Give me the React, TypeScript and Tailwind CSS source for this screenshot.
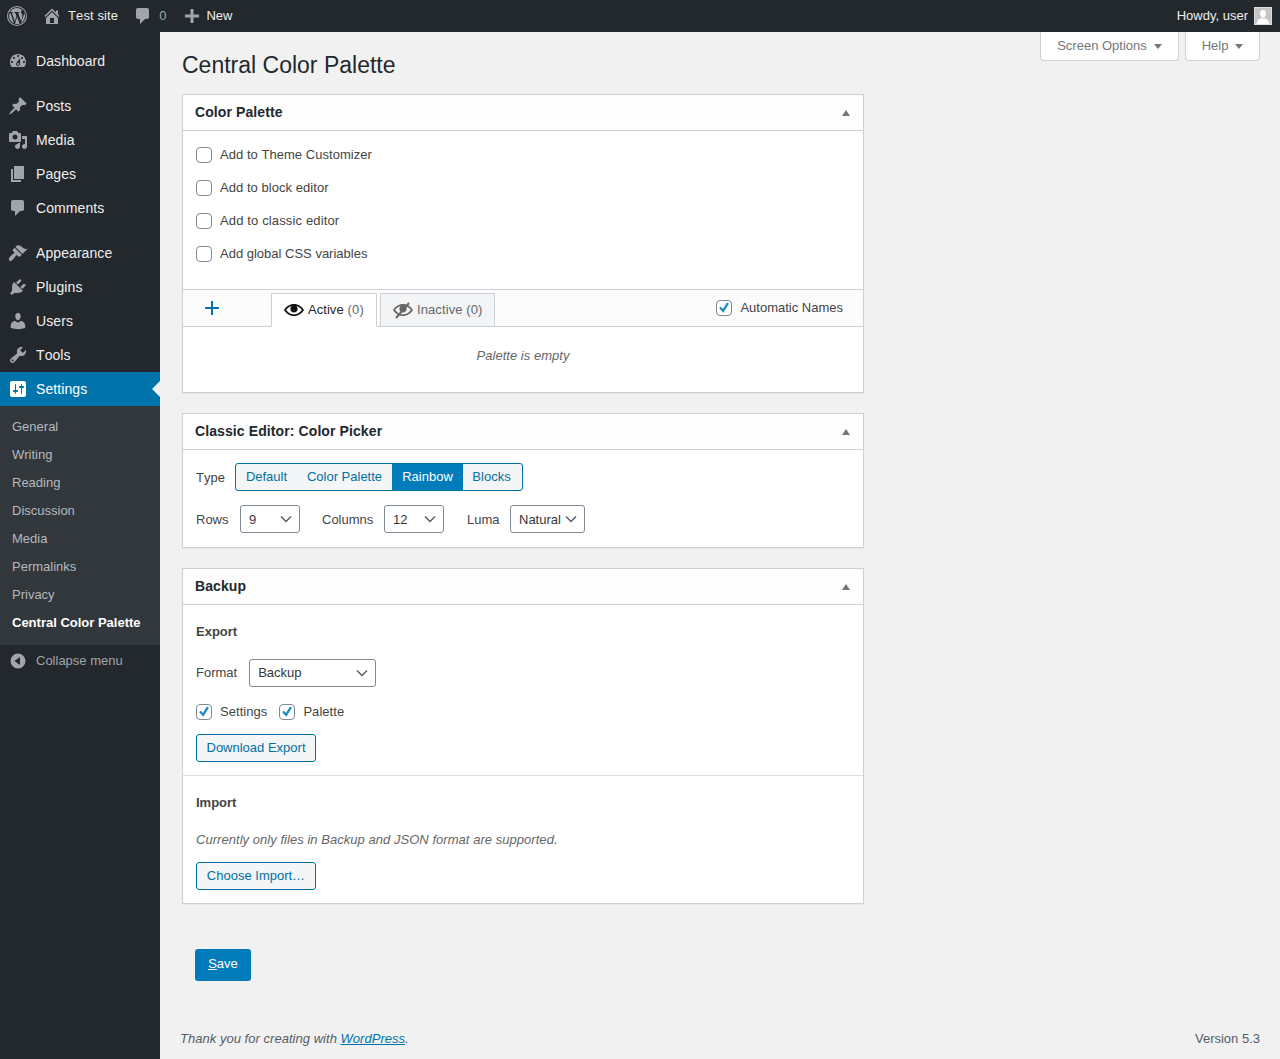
import type { ReactNode } from "react"

const icons: Record<string, string> = {
	dashboard: "M3.76 16h12.48c1.1-1.37 1.76-3.11 1.76-5 0-4.42-3.58-8-8-8s-8 3.58-8 8c0 1.89.66 3.63 1.76 5zM10 4c.55 0 1 .45 1 1s-.45 1-1 1-1-.45-1-1 .45-1 1-1zM6 6c.55 0 1 .45 1 1s-.45 1-1 1-1-.45-1-1 .45-1 1-1zm8 0c.55 0 1 .45 1 1s-.45 1-1 1-1-.45-1-1 .45-1 1-1zm-5.37 5.55L12 7v6c0 1.1-.9 2-2 2s-2-.9-2-2c0-.57.24-1.08.63-1.45zM4 10c.55 0 1 .45 1 1s-.45 1-1 1-1-.45-1-1 .45-1 1-1zm12 0c.55 0 1 .45 1 1s-.45 1-1 1-1-.45-1-1 .45-1 1-1zm-5 3c0-.55-.45-1-1-1s-1 .45-1 1 .45 1 1 1 1-.45 1-1z",
	post: "M10.44 3.02l1.82-1.82 6.36 6.35-1.83 1.82c-1.05-.68-2.48-.57-3.41.36l-.75.75c-.92.93-1.04 2.35-.35 3.41l-1.83 1.82-2.41-2.41-2.8 2.79c-.42.42-3.38 2.71-3.8 2.29s1.86-3.39 2.28-3.81l2.79-2.79L4.1 9.36l1.83-1.82c1.05.69 2.48.57 3.4-.36l.75-.75c.93-.92 1.05-2.35.36-3.41z",
	media: "M13 11V4c0-.55-.45-1-1-1h-1.67L9 1H5L3.67 3H2c-.55 0-1 .45-1 1v7c0 .55.45 1 1 1h10c.55 0 1-.45 1-1zM7 4.5c1.38 0 2.5 1.12 2.5 2.5S8.38 9.5 7 9.5 4.5 8.38 4.5 7 5.62 4.5 7 4.5zM14 6h5v10.5c0 1.38-1.12 2.5-2.5 2.5S14 17.88 14 16.5s1.12-2.5 2.5-2.5c.17 0 .34.02.5.05V9h-3V6zm-4 8.05V13h2v3.5c0 1.38-1.12 2.5-2.5 2.5S7 17.88 7 16.5 8.12 14 9.5 14c.17 0 .34.02.5.05z",
	page: "M6 15V2h10v13H6zm-1 1h8v2H3V5h2v11z",
	comment: "M5 2h9c1.1 0 2 .9 2 2v7c0 1.1-.9 2-2 2h-2l-5 5v-5H5c-1.1 0-2-.9-2-2V4c0-1.1.9-2 2-2z",
	appearance: "M14.48 11.06L7.41 3.99l1.5-1.5c.5-.56 2.3-.47 3.51.32 1.21.8 1.43 1.28 2.91 2.1 1.18.64 2.45 1.26 4.45.85zm-.71.71L6.7 4.7 4.93 6.47c-.39.39-.39 1.02 0 1.41l1.06 1.06c.39.39.39 1.03 0 1.42-.6.6-1.43 1.11-2.21 1.69-.35.26-.7.53-1.01.84C1.43 14.23 0 16.06 1.39 17.45c1.39 1.39 3.22-.41 4.19-1.75.31-.31.58-.66.84-1.01.58-.78 1.09-1.61 1.69-2.21.39-.39 1.03-.39 1.42 0l1.06 1.06c.39.39 1.02.39 1.41 0z",
	plugin: "M13.11 4.36L9.87 7.6 8 5.73l3.24-3.24c.35-.34 1.05-.2 1.56.32.52.51.66 1.21.31 1.55zm-8 1.77l.91-1.12 9.01 9.01-1.19.84c-.71.71-2.63 1.16-3.82 1.16H6.14L4.9 17.26c-.59.59-1.54.59-2.12 0-.59-.58-.59-1.53 0-2.12l1.24-1.24v-3.88c0-1.13.4-3.19 1.09-3.89zm7.26 3.97l3.24-3.24c.34-.35 1.04-.21 1.55.31.52.51.66 1.21.31 1.55l-3.24 3.25z",
	users: "M10 9.25c-2.27 0-2.73-3.44-2.73-3.44C7 4.02 7.82 2 9.97 2c2.16 0 2.98 2.02 2.71 3.81 0 0-.41 3.44-2.68 3.44zm0 2.57L12.72 10c2.39 0 4.52 2.33 4.52 4.53v2.49s-3.65 1.13-7.24 1.13c-3.65 0-7.24-1.13-7.24-1.13v-2.49c0-2.25 1.94-4.48 4.47-4.48z",
	tools: "M16.68 9.77c-1.34 1.34-3.3 1.67-4.95.99l-5.41 6.52c-.99.99-2.59.99-3.58 0s-.99-2.59 0-3.57l6.52-5.42c-.68-1.65-.35-3.61.99-4.95 1.28-1.28 3.12-1.62 4.72-1.06l-2.89 2.89 2.82 2.82 2.86-2.87c.53 1.58.18 3.39-1.08 4.65zM3.81 16.21c.4.39 1.04.39 1.43 0 .4-.4.4-1.04 0-1.43-.39-.4-1.03-.4-1.43 0-.39.39-.39 1.03 0 1.43z",
	settings: "M18 16V4c0-1.1-.9-2-2-2H4c-1.1 0-2 .9-2 2v12c0 1.1.9 2 2 2h12c1.1 0 2-.9 2-2zM8 11h1c.55 0 1 .45 1 1s-.45 1-1 1H8v1.5c0 .28-.22.5-.5.5s-.5-.22-.5-.5V13H6c-.55 0-1-.45-1-1s.45-1 1-1h1V5.5c0-.28.22-.5.5-.5s.5.22.5.5V11zm5-2h-1c-.55 0-1-.45-1-1s.45-1 1-1h1V5.5c0-.28.22-.5.5-.5s.5.22.5.5V7h1c.55 0 1 .45 1 1s-.45 1-1 1h-1v5.5c0 .28-.22.5-.5.5s-.5-.22-.5-.5V9z",
	home: "M16 8.5l1.530 1.530-1.060 1.060L10 4.620l-6.470 6.470-1.060-1.060L10 2.500l4 4v-2h2v4zm-6-2.460l6 5.990V18H4v-5.970zM12 17v-5H8v5h4z",
	plus: "M17 8.500v3h-5.500V17h-3v-5.500H3v-3h5.500V3h3v5.500z",
	collapse: "M10 2.500a7.500 7.500 0 1 0 0 15 7.500 7.500 0 0 0 0-15zM12 6v8L6.500 10z",
	eye: "M10 4C5.800 4 2.100 6.400 0 10c2.100 3.600 5.800 6 10 6s7.900-2.400 10-6c-2.100-3.600-5.800-6-10-6zm0 10.400c-3.100 0-6-1.600-7.900-4.400C3.500 8 5.500 6.700 7.800 6.100 6.900 6.800 6.400 7.800 6.400 9c0 2 1.600 3.600 3.600 3.600s3.600-1.600 3.600-3.600c0-1.200-.5-2.200-1.400-2.900 2.300.6 4.300 1.900 5.700 3.900-1.900 2.800-4.800 4.400-7.900 4.400z",
}

function Icon({ name, className }: { name: string; className: string }) {
	return (
		<svg viewBox="0 0 20 20" className={className} fill="currentColor" fillRule="evenodd">
			<path d={icons[name]} />
		</svg>
	)
}

function WpLogo() {
	return (
		<svg viewBox="0 0 20 20" className="w-5 h-5 text-[#a0a5aa]" fill="currentColor">
			<path fillRule="evenodd" d="M10 0a10 10 0 1 0 0 20 10 10 0 0 0 0-20zm0 1A9 9 0 1 1 10 19 9 9 0 0 1 10 1z" />
			<path d="M3.300 6.700 7 17.200C4.100 15.900 2 13.100 2 10c0-1.200.4-2.300 1.300-3.300zM10.100 10.900l2.500 6.800c-.8.300-1.700.4-2.600.4-.7 0-1.400-.1-2-.3zM16.900 6.100c.7 1.200 1.100 2.500 1.100 3.900 0 3-1.600 5.500-4 6.900l2.500-7c.4-1.100.6-2 .6-2.700 0-.4-.1-.8-.2-1.100z" />
			<path d="M15.500 4.600c-.8-.1-1.500.5-1.500 1.400 0 .7.400 1.300.8 2 .3.500.6 1.200.6 2.100 0 .7-.3 1.500-.6 2.600l-.8 2.600-2.800-8.400.9-.1c.4-.1.4-.8-.1-.8l-2.300.1-2.200-.1c-.4 0-.5.700 0 .8l.8.1 1.200 3.300-1.700 5.100-2.900-8.400.9-.1c.4-.1.4-.8-.1-.8l-2.200.1h-.4C4.600 3.400 7.100 2 10 2c2.100 0 4 .9 5.500 2.600z" />
		</svg>
	)
}

function Chevron() {
	return (
		<svg viewBox="0 0 12 8" className="w-[12px] h-[8px]" fill="none" stroke="#555d66" strokeWidth="1.500">
			<path d="M1 1.500 6 6.500 11 1.500" />
		</svg>
	)
}

function Check({ on, label, textClass = "" }: { on?: boolean; label: string; textClass?: string }) {
	return (
		<label className="flex items-center gap-2 h-4 text-[13px] text-[#444]">
			<span className="w-4 h-4 rounded-[4px] border border-[#7e8993] bg-white flex items-center justify-center">
				{on && (
					<svg viewBox="0 0 16 16" className="w-[16px] h-[16px]" fill="none" stroke="#1e8cbe" strokeWidth="2.600">
						<path d="M3.500 7.500 7 11.300 12.500 2.500" />
					</svg>
				)}
			</span>
			<span className={textClass}>{label}</span>
		</label>
	)
}

function Select({ value, w, textClass = "" }: { value: string; w: string; textClass?: string }) {
	return (
		<div className={`${w} h-7 rounded-[3px] border border-[#7e8993] bg-white flex items-center justify-between pl-2 pr-[7px] text-[13px] text-[#32373c]`}>
			<span className={textClass}>{value}</span>
			<Chevron />
		</div>
	)
}

function Postbox({ title, children }: { title: string; children: ReactNode }) {
	return (
		<section className="bg-white border border-[#ccd0d4] shadow-[0_1px_1px_rgba(0,0,0,0.04)]">
			<div className="h-9 flex items-center justify-between pl-3 pr-[13px] bg-[#fdfdfd] border-b border-[#ccd0d4]">
				<h2 className="text-[14px] font-bold tracking-[0.1px] text-[#23282d]">{title}</h2>
				<span className="w-0 h-0 border-x-4 border-x-transparent border-b-[6px] border-b-[#72777c]" />
			</div>
			{children}
		</section>
	)
}

function OutlineButton({ label }: { label: string }) {
	return (
		<button className="w-[120px] h-7 rounded-[3px] border border-[#0071a1] bg-[#f3f5f6] text-[13px] text-[#0071a1]">{label}</button>
	)
}

const mainMenu = [
	[{ icon: "dashboard", label: "Dashboard" }],
	[
		{ icon: "post", label: "Posts" },
		{ icon: "media", label: "Media" },
		{ icon: "page", label: "Pages" },
		{ icon: "comment", label: "Comments" },
	],
	[
		{ icon: "appearance", label: "Appearance" },
		{ icon: "plugin", label: "Plugins" },
		{ icon: "users", label: "Users" },
		{ icon: "tools", label: "Tools" },
	],
]

const subMenu = ["General", "Writing", "Reading", "Discussion", "Media", "Permalinks", "Privacy"]

function Sidebar() {
	return (
		<aside className="w-40 shrink-0 bg-[#23282d] pt-3 flex flex-col">
			<nav className="flex flex-col gap-[11px]">
				{mainMenu.map((group, i) => (
					<ul key={i}>
						{group.map((item) => (
							<li key={item.label} className="h-[34px] flex items-center text-[14px] tracking-[0.08px] text-[#eee]">
								<span className="w-9 pl-2 shrink-0">
									<Icon name={item.icon} className="w-5 h-5 text-[#a0a5aa]" />
								</span>
								{item.label}
							</li>
						))}
					</ul>
				))}
			</nav>
			<div className="relative h-[34px] bg-[#0073aa] flex items-center text-[14px] tracking-[0.08px] text-white">
				<span className="w-9 pl-2 shrink-0">
					<Icon name="settings" className="w-5 h-5" />
				</span>
				Settings
				<span className="absolute right-0 top-[9px] w-0 h-0 border-y-8 border-y-transparent border-r-8 border-r-[#f1f1f1]" />
			</div>
			<ul className="bg-[#32373c] pt-[7px] pb-[8px] text-[13px] text-[#b4b9be]">
				{subMenu.map((s) => (
					<li key={s} className="h-7 flex items-center pl-3">{s}</li>
				))}
				<li className="h-7 flex items-center pl-3 font-bold text-white">Central Color Palette</li>
			</ul>
			<div className="h-[32px] flex items-center text-[13px] text-[#a0a5aa]">
				<span className="w-9 pl-2 shrink-0">
					<Icon name="collapse" className="w-5 h-5" />
				</span>
				Collapse menu
			</div>
		</aside>
	)
}

function AdminBar() {
	return (
		<header className="h-8 bg-[#23282d] flex items-center justify-between text-[13px] text-[#eee] shrink-0">
			<div className="flex items-center">
				<span className="ml-[7px] w-5 h-5"><WpLogo /></span>
				<Icon name="home" className="ml-[15px] w-5 h-5 text-[#a0a5aa]" />
				<span className="ml-[6px] tracking-[0.12px]">Test site</span>
				<Icon name="comment" className="ml-[15px] w-5 h-5 text-[#a0a5aa]" />
				<span className="ml-[6px] text-[#a0a5aa]">0</span>
				<Icon name="plus" className="ml-[16px] w-5 h-5 text-[#a0a5aa]" />
				<span className="ml-[4px]">New</span>
			</div>
			<div className="flex items-center gap-[6px] pr-2 [font-kerning:auto]">
				Howdy, user
				<span className="w-[18px] h-[18px] bg-[#c4c4c4] border border-[#ddd] overflow-hidden flex items-end justify-center">
					<svg viewBox="0 0 16 16" className="w-4 h-4" fill="#fff">
						<path d="M8 2c2 0 3 1.500 3 3.500S9.800 10 8 10 5 7.500 5 5.500 6 2 8 2zM1.500 16c0-3 2.500-5.500 4.500-5.500h4c2 0 4.500 2.500 4.500 5.500z" />
					</svg>
				</span>
			</div>
		</header>
	)
}

function PalettePanel() {
	return (
		<Postbox title="Color Palette">
			<div className="pt-4 pb-[27px] pl-[13px] flex flex-col gap-[17px]">
				<Check label="Add to Theme Customizer" textClass="tracking-[0.04px]" />
				<Check label="Add to block editor" textClass="tracking-[0.05px]" />
				<Check label="Add to classic editor" textClass="tracking-[0.14px]" />
				<Check label="Add global CSS variables" />
			</div>
			<div className="h-[38px] bg-[#fcfcfc] border-y border-[#ccd0d4] flex items-end">
				<div className="w-[88px] h-full flex items-center pl-[21px]">
					<svg viewBox="0 0 16 16" className="w-4 h-4" fill="none" stroke="#0073aa" strokeWidth="2">
						<path d="M8 1v14M1 8h14" />
					</svg>
				</div>
				<div className="h-[34px] w-[106px] -mb-px bg-white border border-b-white border-[#ccd0d4] flex items-center pl-3 text-[13px] tracking-[0.05px] text-[#23282d]">
					<Icon name="eye" className="w-5 h-5 mr-[4px] text-[#111]" />
					Active&nbsp;<span className="text-[#666] tracking-[0.3px]">(0)</span>
				</div>
				<div className="h-[33px] w-[115px] ml-[3px] bg-[#f3f4f5] border border-b-0 border-[#ccd0d4] flex items-center pl-3 text-[13px] tracking-[0.1px] text-[#666]">
					<span className="relative w-5 h-5 mr-[4px]">
						<Icon name="eye" className="w-5 h-5 text-[#666]" />
						<svg viewBox="0 0 20 20" className="absolute inset-0 w-5 h-5" stroke="#666" strokeWidth="2">
							<path d="M3 18 16 3" />
						</svg>
					</span>
					Inactive (0)
				</div>
				<div className="ml-auto h-full flex items-center pr-[19px]">
					<Check on label="Automatic Names" textClass="mb-px mr-px" />
				</div>
			</div>
			<p className="h-[65px] flex items-center justify-center italic text-[13px] tracking-[0.03px] text-[#666] pb-2">Palette is empty</p>
		</Postbox>
	)
}

function PickerPanel() {
	return (
		<Postbox title="Classic Editor: Color Picker">
			<div className="pt-[13px] pb-[14px] pl-[13px] flex flex-col gap-[14px] text-[13px] text-[#444]">
				<div className="flex items-center">
					<span className="w-[39px] pt-px">Type</span>
					<div className="h-7 flex rounded-[3px] border border-[#0071a1] bg-[#f3f5f6] overflow-hidden text-[#0071a1]">
						<span className="w-[61px] flex items-center justify-center">Default</span>
						<span className="w-[95px] flex items-center justify-center">Color Palette</span>
						<span className="w-[71px] flex items-center justify-center bg-[#007cba] text-white">Rainbow</span>
						<span className="w-[59px] pr-[2px] flex items-center justify-center">Blocks</span>
					</div>
				</div>
				<div className="flex items-center">
					<span className="w-[44px] pt-px">Rows</span>
					<Select value="9" w="w-[60px]" textClass="pt-px" />
					<span className="ml-[22px] w-[62px] pt-px">Columns</span>
					<Select value="12" w="w-[60px]" textClass="pt-px" />
					<span className="ml-[23px] w-[43px] pt-px">Luma</span>
					<Select value="Natural" w="w-[75px]" textClass="pt-px" />
				</div>
			</div>
		</Postbox>
	)
}

function BackupPanel() {
	return (
		<Postbox title="Backup">
			<div className="px-[13px] pt-[19px] pb-[13px] border-b border-[#ddd] text-[13px] text-[#444]">
				<h3 className="font-bold leading-[15px]">Export</h3>
				<div className="mt-[20px] flex items-center gap-3">
					Format
					<Select value="Backup" w="w-[127px]" />
				</div>
				<div className="mt-[16px] flex items-center gap-3 pt-px">
					<Check on label="Settings" textClass="tracking-[0.05px]" />
					<Check on label="Palette" textClass="tracking-[0.05px]" />
				</div>
				<div className="mt-[14px]">
					<OutlineButton label="Download Export" />
				</div>
			</div>
			<div className="px-[13px] pt-[19px] pb-[13px] text-[13px] text-[#444]">
				<h3 className="font-bold leading-[15px]">Import</h3>
				<p className="mt-[22px] italic leading-[15px] tracking-[0.04px] text-[#666]">Currently only files in Backup and JSON format are supported.</p>
				<div className="mt-[15px]">
					<OutlineButton label="Choose Import…" />
				</div>
			</div>
		</Postbox>
	)
}

export default function App() {
	return (
		<div className="h-[1059px] overflow-hidden flex flex-col bg-[#f1f1f1] [font-kerning:none] font-['Liberation_Sans',Arial,sans-serif]">
			<AdminBar />
			<div className="flex flex-1 min-h-0">
				<Sidebar />
				<main className="flex-1 flex flex-col min-w-0">
					<div className="flex flex-1">
						<div className="w-[682px] ml-[22px] flex flex-col">
							<h1 className="mt-[19px] mb-[15px] text-[23px] leading-[28px] text-[#23282d]">Central Color Palette</h1>
							<div className="flex flex-col gap-5">
								<PalettePanel />
								<PickerPanel />
								<BackupPanel />
							</div>
							<button className="mt-[45px] ml-[13px] w-14 h-8 pb-[2px] rounded-[3px] bg-[#007cba] text-[13px] text-white">
								<span className="underline">S</span>ave
							</button>
						</div>
						<div className="ml-auto mr-5 flex gap-[6px] items-start text-[13px] text-[#72777c]">
							<div className="w-[139px] h-[29px] bg-white border border-t-0 border-[#ccd0d4] rounded-b-[4px] flex items-center justify-center gap-[7px]">
								Screen Options
								<span className="w-0 h-0 border-x-4 border-x-transparent border-t-[5px] border-t-[#72777c]" />
							</div>
							<div className="w-[75px] h-[29px] bg-white border border-t-0 border-[#ccd0d4] rounded-b-[4px] flex items-center justify-center gap-[7px]">
								Help
								<span className="w-0 h-0 border-x-4 border-x-transparent border-t-[5px] border-t-[#72777c]" />
							</div>
						</div>
					</div>
					<footer className="h-[40px] pb-[1px] px-5 flex items-center justify-between text-[13px] text-[#555d66]">
						<span className="italic tracking-[0.03px]">Thank you for creating with <a className="text-[#0073aa] underline">WordPress</a>.</span>
						<span className="[font-kerning:auto]">Version 5.3</span>
					</footer>
				</main>
			</div>
		</div>
	)
}
